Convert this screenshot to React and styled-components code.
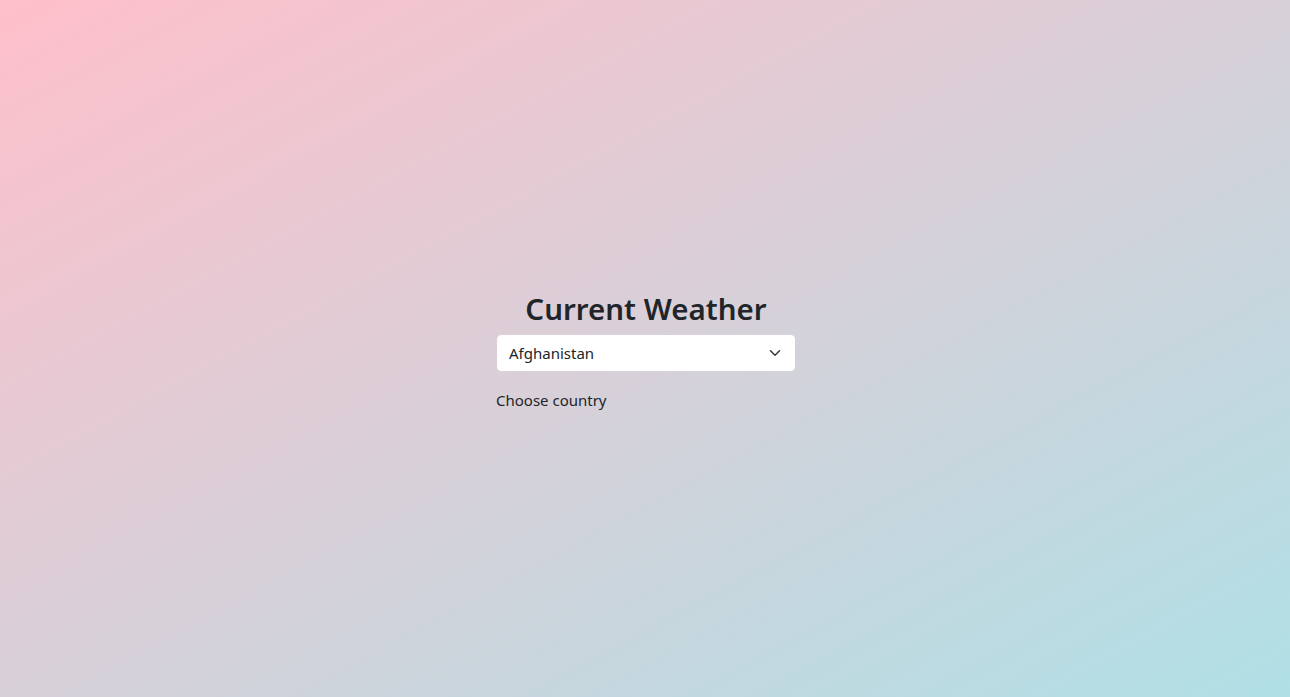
import * as React from 'react'
import styled, { createGlobalStyle } from 'styled-components'

const GlobalStyle = createGlobalStyle`
    *, *::before, *::after {
        box-sizing: border-box;
    }
    body {
        margin: 0;
        font-family: "Noto Sans", "Open Sans", sans-serif;
        color: #212529;
    }
`
const Page = styled.div`
    display: flex;
    align-items: center;
    justify-content: center;
    min-height: 697px;
    background: linear-gradient(to bottom right, pink, powderblue);
`
const Wrapper = styled.div`
    display: flex;
    flex-direction: column;
    width: 300px;
    margin-left: 2px;
    padding-top: 7px;
`
const Title = styled.h1`
    margin: 0 0 10px;
    font-size: 29.5px;
    font-weight: 600;
    line-height: 32px;
    text-align: center;
    color: #212529;
`
const SelectBox = styled.div`
    position: relative;
    margin-left: 1px;
    width: 298px;
`
const Select = styled.select`
    appearance: none;
    display: block;
    width: 100%;
    height: 36px;
    padding: 0 36px 0 11px;
    border: 1px solid #ffffff;
    border-radius: 4px;
    background: #ffffff;
    font-family: inherit;
    font-size: 15px;
    color: #212529;
    outline: none;
`
const Chevron = styled.svg`
    position: absolute;
    right: 13px;
    top: 12px;
    pointer-events: none;
`
const Label = styled.label`
    margin-top: 17px;
    font-size: 15px;
    line-height: 24px;
`

const App = () => {
    const [country, setCountry] = React.useState('Afghanistan')

    return (
        <Page>
            <GlobalStyle />
            <Wrapper>
                <Title>Current Weather</Title>
                <SelectBox>
                    <Select id="country" value={country} onChange={(e) => setCountry(e.target.value)}>
                        <option>Afghanistan</option>
                        <option>Albania</option>
                        <option>Algeria</option>
                    </Select>
                    <Chevron width="14" height="12" viewBox="0 0 16 16" fill="none">
                        <path d="m2 5 6 6 6-6" stroke="#343a40" strokeWidth="2" strokeLinecap="round" strokeLinejoin="round" />
                    </Chevron>
                </SelectBox>
                <Label htmlFor="country">Choose country</Label>
            </Wrapper>
        </Page>
    )
}
export default App
